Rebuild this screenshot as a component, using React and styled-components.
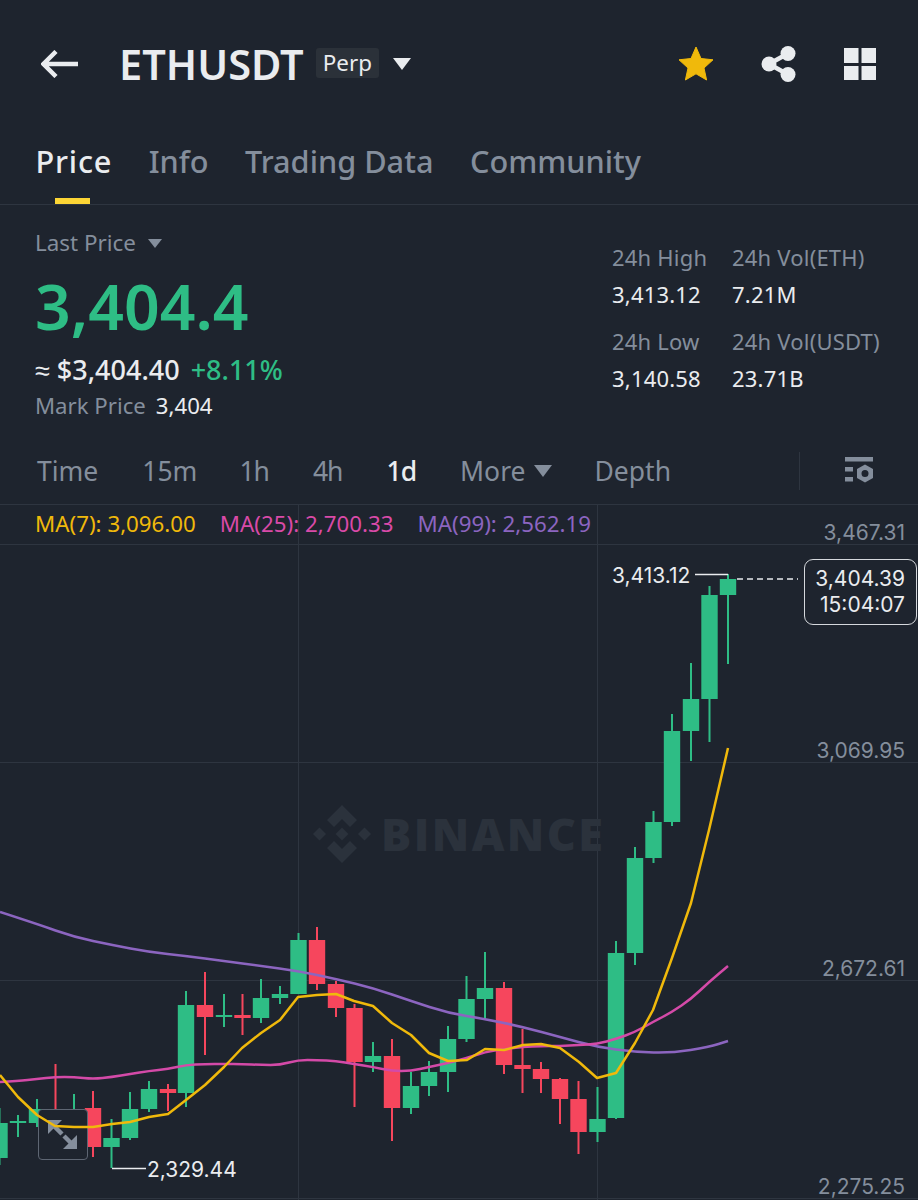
import React from 'react'
import styled, { createGlobalStyle } from 'styled-components'

const BG = '#1e242e'
const LINE = '#2e3540'
const GREEN = '#2ebd85'
const RED = '#f6465d'
const TEXT = '#eaecef'
const MUTED = '#848e9c'

const GlobalStyle = createGlobalStyle`
    html, body {
        margin: 0;
        padding: 0;
        background: ${BG};
    }
    body {
        font-family: "Noto Sans", "Liberation Sans", sans-serif;
    }
`

const Page = styled.div`
    width: 918px;
    height: 1200px;
    overflow: hidden;
    background: ${BG};
    display: flex;
    flex-direction: column;
`

const Header = styled.header`
    height: 128px;
    flex: none;
    display: flex;
    align-items: center;
    padding: 0 42px 0 41px;
`

const BackIcon = styled.svg`
    width: 37px;
    height: 28px;
    margin-right: 41px;
`

const Symbol = styled.h1`
    margin: 0;
    font-size: 41.5px;
    font-weight: 600;
    color: ${TEXT};
`

const Badge = styled.span`
    margin: 0 0 2px 12px;
    padding: 0 7px;
    height: 30px;
    line-height: 30px;
    border-radius: 3px;
    background: #2b3139;
    color: ${TEXT};
    font-size: 22.4px;
`

const Caret = styled.span`
    width: 0;
    height: 0;
    border-left: ${p => p.size}px solid transparent;
    border-right: ${p => p.size}px solid transparent;
    border-top: ${p => p.size * 1.3}px solid ${p => p.color};
    margin-left: ${p => p.gap}px;
`

const HeaderActions = styled.div`
    margin-left: auto;
    display: flex;
    align-items: center;
    gap: 47px;
`

const Tabs = styled.nav`
    height: 77px;
    flex: none;
    display: flex;
    gap: 36.5px;
    padding-left: 35.5px;
    border-bottom: 1px solid ${LINE};
    box-sizing: border-box;
`

const Tab = styled.div`
    position: relative;
    font-size: 30.7px;
    line-height: 66px;
    font-weight: 500;
    letter-spacing: ${p => (p.active ? '0.8px' : '0')};
    color: ${p => (p.active ? TEXT : MUTED)};

    &::after {
        content: '';
        display: ${p => (p.active ? 'block' : 'none')};
        position: absolute;
        left: 19.5px;
        bottom: 0;
        width: 35px;
        height: 6px;
        background: #fcd535;
    }
`

const Stats = styled.section`
    height: 233px;
    flex: none;
    display: flex;
    justify-content: space-between;
    padding: 25px 36px 0 35px;
    box-sizing: border-box;
`

const PriceColumn = styled.div`
    display: flex;
    flex-direction: column;
`

const LastPrice = styled.div`
    display: flex;
    align-items: center;
    font-size: 22.4px;
    line-height: 26px;
    color: ${MUTED};
`

const BigPrice = styled.div`
    font-size: 62.5px;
    line-height: 76px;
    margin-top: 12px;
    font-weight: 600;
    color: ${GREEN};
`

const FiatRow = styled.div`
    display: flex;
    gap: 11px;
    margin-top: 10px;
    font-size: 27px;
    line-height: 32px;
    font-weight: 500;
    color: ${TEXT};
`

const Change = styled.span`
    color: ${GREEN};
`

const MarkRow = styled.div`
    display: flex;
    gap: 10px;
    margin-top: 5px;
    font-size: 22.2px;
    line-height: 30px;
    color: ${MUTED};
`

const MarkValue = styled.span`
    color: ${TEXT};
`

const StatsGrid = styled.div`
    display: grid;
    grid-template-columns: 120px 150px;
    grid-auto-rows: 84px;
    margin-top: 12px;
    margin-left: auto;
`

const StatLabel = styled.div`
    font-size: 22px;
    line-height: 30px;
    letter-spacing: 0.2px;
    color: ${MUTED};
`

const StatValue = styled.div`
    font-size: 22px;
    line-height: 30px;
    letter-spacing: 0.2px;
    margin-top: 7px;
    color: ${TEXT};
`

const Intervals = styled.div`
    height: 67px;
    flex: none;
    display: flex;
    align-items: center;
    gap: 44px;
    padding: 0 44px 0 37px;
    border-bottom: 1px solid ${LINE};
    box-sizing: border-box;
`

const Interval = styled.div`
    display: flex;
    align-items: center;
    margin-left: ${p => p.pull || 0}px;
    font-size: 26.5px;
    font-weight: ${p => (p.active ? 500 : 400)};
    letter-spacing: ${p => (p.tight ? '-1px' : '0')};
    color: ${p => (p.active ? TEXT : MUTED)};
`

const IntervalSide = styled.div`
    margin-left: auto;
    height: 38px;
    display: flex;
    align-items: center;
    gap: 44px;
    padding-left: 44px;
    border-left: 1px solid ${LINE};
`

const Chart = styled.div`
    position: relative;
    flex: 1;
`

const ChartSvg = styled.svg`
    display: block;
    width: 918px;
    height: 695px;
`

const LinesOverlay = styled(ChartSvg)`
    position: absolute;
    left: 0;
    top: 0;
    pointer-events: none;
`

const MaRow = styled.div`
    position: absolute;
    left: 35px;
    top: 4px;
    display: flex;
    gap: 24px;
    font-size: 22.3px;
    line-height: 30px;
`

const MaLabel = styled.span`
    color: ${p => p.color};
`

const AxisLabel = styled.div`
    position: absolute;
    right: 13px;
    top: ${p => p.top}px;
    font-family: Inter, "Liberation Sans", sans-serif;
    font-size: 21px;
    line-height: 26px;
    color: ${MUTED};
`

const PriceMark = styled.div`
    position: absolute;
    left: ${p => p.left}px;
    top: ${p => p.top}px;
    font-family: Inter, "Liberation Sans", sans-serif;
    font-size: 21px;
    line-height: 26px;
    color: ${TEXT};
`

const LiveBox = styled.div`
    position: absolute;
    left: 804px;
    top: 54px;
    width: 113px;
    height: 66px;
    box-sizing: border-box;
    border: 1.5px solid #d5d8dc;
    border-radius: 9px;
    padding: 6px 11px 0 0;
    text-align: right;
    font-family: Inter, "Liberation Sans", sans-serif;
    font-size: 21px;
    line-height: 25.5px;
    color: ${TEXT};
    background: ${BG};
`

const Watermark = styled.div`
    position: absolute;
    left: 313px;
    top: 298px;
    display: flex;
    align-items: center;
    gap: 10px;
`

const WatermarkText = styled.span`
    font-family: "Open Sans", sans-serif;
    font-size: 45px;
    line-height: 62px;
    font-weight: 800;
    letter-spacing: 2.4px;
    color: #2b323c;
`

const ExpandButton = styled.div`
    position: absolute;
    left: 38px;
    top: 604px;
    width: 50px;
    height: 51px;
    box-sizing: border-box;
    border: 1.5px solid #5e6673;
    border-radius: 4px;
    background: ${BG};
    display: flex;
    align-items: center;
    justify-content: center;
`

// x, high, top of body, bottom of body, low, up
const candles = [
    [-0.5, 1108, 1123, 1158, 1165, 1],
    [18, 1115, 1121, 1123, 1137, 1],
    [37, 1099, 1109, 1123, 1127, 1],
    [55.5, 1064, 1109, 1145, 1150, 0],
    [74, 1094, 1109, 1116, 1120, 1],
    [93, 1091, 1108, 1147, 1157, 0],
    [111.5, 1119, 1138, 1147, 1168, 1],
    [130, 1092, 1109, 1138, 1140, 1],
    [149, 1081, 1089, 1109, 1112, 1],
    [168, 1084, 1089, 1093, 1111, 0],
    [186, 991, 1005, 1093, 1107, 1],
    [205, 972, 1005, 1017, 1055, 0],
    [224, 994, 1015, 1017, 1027, 1],
    [242.5, 994, 1015, 1018, 1035, 0],
    [261, 979, 998, 1018, 1023, 1],
    [280, 986, 994, 998, 1004, 1],
    [298.5, 933, 940, 994, 994, 1],
    [317, 927, 940, 984, 990, 0],
    [336, 981, 984, 1008, 1017, 0],
    [354.5, 1004, 1008, 1062, 1107, 0],
    [373, 1042, 1056, 1062, 1072, 1],
    [392, 1039, 1056, 1108, 1141, 0],
    [411, 1072, 1086, 1108, 1114, 1],
    [429, 1061, 1072, 1086, 1096, 1],
    [448, 1026, 1039, 1072, 1092, 1],
    [466.5, 976, 999, 1039, 1042, 1],
    [485, 952, 988, 999, 1019, 1],
    [504, 982, 988, 1065, 1074, 0],
    [522.5, 1029, 1065, 1069, 1093, 0],
    [541, 1062, 1069, 1079, 1093, 0],
    [560, 1078, 1079, 1099, 1124, 0],
    [578.5, 1081, 1099, 1132, 1154, 0],
    [597.5, 1087, 1119, 1132, 1142, 1],
    [616, 941, 953, 1118, 1119, 1],
    [635, 847, 858, 953, 965, 1],
    [653.5, 811, 822, 858, 863, 1],
    [672, 714, 731, 822, 826, 1],
    [691, 663, 699, 731, 761, 1],
    [709.5, 586, 595, 699, 742, 1],
    [728, 574, 579, 595, 664, 1],
]

const ma7 = '0,1075 18,1097 37,1115 55,1126 74,1127 93,1127 112,1124 130,1122 149,1117 168,1114 186,1100 205,1085 224,1067 242,1048 261,1033 280,1020 298,997 317,995 336,994 354,1001 373,1006 392,1023 411,1035 429,1053 448,1061 467,1060 485,1049 504,1050 523,1045 541,1044 560,1048 579,1062 597,1078 616,1073 635,1043 653,1010 672,958 691,903 709,830 728,748'
const ma25 = [[0, 1082], [18, 1081], [37, 1079], [55, 1077], [74, 1077], [93, 1079], [112, 1077], [130, 1074], [149, 1071], [168, 1069], [186, 1065], [205, 1064], [224, 1064], [242, 1064], [261, 1065], [280, 1065], [298, 1060], [317, 1060], [336, 1061], [354, 1064], [373, 1067], [392, 1071], [411, 1071], [429, 1067], [448, 1063], [467, 1058], [485, 1052], [504, 1049], [523, 1047], [541, 1046], [560, 1046], [579, 1045], [597, 1044], [616, 1039], [635, 1032], [653, 1022], [672, 1012], [691, 999], [709, 982], [728, 966]]
const ma99 = [[0, 912], [37, 924], [74, 937], [112, 945], [149, 952], [186, 956], [224, 961], [261, 966], [298, 971], [336, 979], [373, 988], [411, 1001], [448, 1013], [485, 1019], [523, 1027], [560, 1037], [597, 1047], [635, 1052], [672, 1053], [709, 1047], [728, 1041]]

// rounds the corners of a moving average through the midpoints of its segments
const smoothPath = points => {
    let d = `M${points[0][0]} ${points[0][1]}`
    for (let i = 1; i < points.length - 1; i++) {
        const midX = (points[i][0] + points[i + 1][0]) / 2
        const midY = (points[i][1] + points[i + 1][1]) / 2
        d += `Q${points[i][0]} ${points[i][1]} ${midX} ${midY}`
    }
    const last = points[points.length - 1]
    return `${d}L${last[0]} ${last[1]}`
}

const Candle = ({ data }) => {
    const [x, high, top, bottom, low, up] = data
    return (
        <g fill={up ? GREEN : RED}>
            <rect x={x - 1} y={high} width="2" height={low - high} />
            <rect x={x - 8.2} y={top} width="16.4" height={Math.max(bottom - top, 2)} />
        </g>
    )
}

const StarIcon = () => (
    <svg width="36" height="36" viewBox="0 0 36 36">
        <path
            d="M18 1l5 11.5 12 1.300-9 8.200 2.600 12-10.600-6.200-10.600 6.200 2.600-12-9-8.200 12-1.300z"
            fill="#f0b90b"
            stroke="#f0b90b"
            strokeLinejoin="round"
        />
    </svg>
)

const ShareIcon = () => (
    <svg width="36" height="36" viewBox="0 0 36 36" fill={TEXT}>
        <circle cx="27" cy="7.500" r="7.500" />
        <circle cx="8" cy="18" r="7.500" />
        <circle cx="27" cy="28.500" r="7.500" />
        <path d="M8 18L27 7.500M8 18l19 10.500" stroke={TEXT} strokeWidth="4.500" />
    </svg>
)

const GridIcon = () => (
    <svg width="32" height="32" viewBox="0 0 32 32" fill={TEXT}>
        <rect x="0" y="0" width="14.500" height="15" />
        <rect x="17.500" y="0" width="14.500" height="15" />
        <rect x="0" y="18" width="14.500" height="14" />
        <rect x="17.500" y="18" width="14.500" height="14" />
    </svg>
)

const SettingsIcon = () => (
    <svg width="30" height="30" viewBox="0 0 30 30" fill={MUTED}>
        <rect x="1" y="1" width="28" height="4.500" />
        <rect x="1" y="11" width="8" height="4.500" />
        <rect x="1" y="21" width="8" height="4.500" />
        <path
            fillRule="evenodd"
            d="M21 8.500l8 4.500v9l-8 4.500-8-4.500v-9zM21 14a3.500 3.500 0 1 0 0 7 3.500 3.500 0 0 0 0-7z"
        />
    </svg>
)

const BinanceLogo = () => (
    <svg width="58" height="58" viewBox="0 0 58 58" fill="#2b323c">
        <path d="M29 0l15 15-7 7-8-8-8 8-7-7z" />
        <path d="M29 58L14 43l7-7 8 8 8-8 7 7z" />
        <path d="M6.500 22.500l6.500 6.500-6.500 6.500L0 29z" />
        <path d="M51.500 22.500L58 29l-6.500 6.500L45 29z" />
        <path d="M29 22.500l6.500 6.500-6.500 6.500-6.500-6.500z" />
    </svg>
)

const ExpandIcon = () => (
    <svg width="30" height="30" viewBox="0 0 30 30" fill={MUTED}>
        <path d="M0 0h14L0 14z" />
        <path d="M5 5l9 9" stroke={MUTED} strokeWidth="4.500" />
        <path d="M29 29H15l14-14z" />
        <path d="M24 24l-8-8" stroke={MUTED} strokeWidth="4.500" />
    </svg>
)

const App = () => (
    <Page>
        <GlobalStyle />
        <Header>
            <BackIcon viewBox="0 0 37 28" fill="none" stroke={TEXT} strokeWidth="4.500">
                <path d="M37 14H3M15 1.500L2.500 14 15 26.500" />
            </BackIcon>
            <Symbol>ETHUSDT</Symbol>
            <Badge>Perp</Badge>
            <Caret size={9.500} color={TEXT} gap={14} />
            <HeaderActions>
                <StarIcon />
                <ShareIcon />
                <GridIcon />
            </HeaderActions>
        </Header>
        <Tabs>
            <Tab active>Price</Tab>
            <Tab>Info</Tab>
            <Tab>Trading Data</Tab>
            <Tab>Community</Tab>
        </Tabs>
        <Stats>
            <PriceColumn>
                <LastPrice>
                    Last Price
                    <Caret size={7.500} color={MUTED} gap={12} />
                </LastPrice>
                <BigPrice>3,404.4</BigPrice>
                <FiatRow>
                    ≈ $3,404.40
                    <Change>+8.11%</Change>
                </FiatRow>
                <MarkRow>
                    Mark Price
                    <MarkValue>3,404</MarkValue>
                </MarkRow>
            </PriceColumn>
            <StatsGrid>
                <div>
                    <StatLabel>24h High</StatLabel>
                    <StatValue>3,413.12</StatValue>
                </div>
                <div>
                    <StatLabel>24h Vol(ETH)</StatLabel>
                    <StatValue>7.21M</StatValue>
                </div>
                <div>
                    <StatLabel>24h Low</StatLabel>
                    <StatValue>3,140.58</StatValue>
                </div>
                <div>
                    <StatLabel>24h Vol(USDT)</StatLabel>
                    <StatValue>23.71B</StatValue>
                </div>
            </StatsGrid>
        </Stats>
        <Intervals>
            <Interval>Time</Interval>
            <Interval>15m</Interval>
            <Interval tight pull={-2}>1h</Interval>
            <Interval tight>4h</Interval>
            <Interval tight active>1d</Interval>
            <Interval>
                More
                <Caret size={9.500} color={MUTED} gap={8} />
            </Interval>
            <Interval pull={-1}>Depth</Interval>
            <IntervalSide>
                <SettingsIcon />
            </IntervalSide>
        </Intervals>
        <Chart>
            <ChartSvg viewBox="0 505 918 695">
                <g stroke={LINE} strokeWidth="1">
                    <path d="M0 544.500H918M0 762.500H918M0 980.500H918M0 1198.500H918" />
                    <path d="M298.500 505V1200M597.500 505V1200" />
                </g>
                {candles.map(c => <Candle key={c[0]} data={c} />)}
                <path d="M695 574.500H728" fill="none" stroke={TEXT} strokeWidth="1.500" />
                <path d="M737 579H798" fill="none" stroke={TEXT} strokeWidth="1.500" strokeDasharray="6 4" />
                <path d="M112 1168.500H146" fill="none" stroke={TEXT} strokeWidth="1.500" />
            </ChartSvg>
            <Watermark>
                <BinanceLogo />
                <WatermarkText>BINANCE</WatermarkText>
            </Watermark>
            <ExpandButton>
                <ExpandIcon />
            </ExpandButton>
            <LinesOverlay viewBox="0 505 918 695">
                <g fill="none" strokeWidth="2.500" strokeLinejoin="round">
                    <path d={smoothPath(ma99)} stroke="#8c65c0" />
                    <path d={smoothPath(ma25)} stroke="#d44aa8" />
                    <polyline points={ma7} stroke="#f0b90b" />
                </g>
            </LinesOverlay>
            <MaRow>
                <MaLabel color="#f0b90b">MA(7): 3,096.00</MaLabel>
                <MaLabel color="#d94aa8">MA(25): 2,700.33</MaLabel>
                <MaLabel color="#8c65c0">MA(99): 2,562.19</MaLabel>
            </MaRow>
            <AxisLabel top={15}>3,467.31</AxisLabel>
            <AxisLabel top={233}>3,069.95</AxisLabel>
            <AxisLabel top={451}>2,672.61</AxisLabel>
            <AxisLabel top={669}>2,275.25</AxisLabel>
            <PriceMark left={612} top={58}>3,413.12</PriceMark>
            <PriceMark left={147} top={652}>2,329.44</PriceMark>
            <LiveBox>
                3,404.39
                <br />
                15:04:07
            </LiveBox>
        </Chart>
    </Page>
)

export default App
